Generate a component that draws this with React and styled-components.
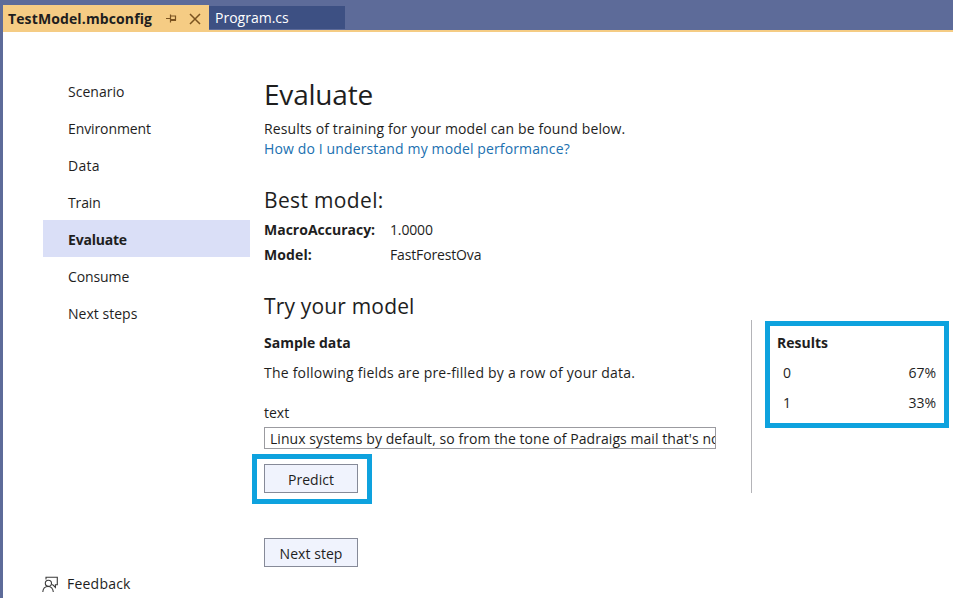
import React from 'react';
//styles
import styled, { createGlobalStyle } from 'styled-components';

//Data
const steps = [
    { name: 'Scenario', spacing: 0.03 },
    { name: 'Environment', spacing: -0.1 },
    { name: 'Data', spacing: 0.25 },
    { name: 'Train', spacing: -0.15 },
    { name: 'Evaluate', spacing: -0.2, active: true },
    { name: 'Consume', spacing: -0.1 },
    { name: 'Next steps', spacing: 0.03 },
];

const results = [
    { label: '0', score: '67%' },
    { label: '1', score: '33%' },
];

const PinIcon = () => (
    <svg width="11" height="9" viewBox="0 0 11 9" fill="none" stroke="#7a5320">
        <path d="M0 4.5H4M4.5 0.5V8.5M4.5 2H9.5V6H4.5" strokeWidth="1.2" />
        <path d="M4.5 6H10" strokeWidth="2" />
    </svg>
);

const CloseIcon = () => (
    <svg width="12" height="12" viewBox="0 0 12 12" fill="none" stroke="#7a5320" strokeWidth="1.5">
        <path d="M1 1L11 11M11 1L1 11" />
    </svg>
);

const FeedbackIcon = () => (
    <svg width="16" height="17" viewBox="0 0 16 17" fill="none" stroke="#3a3a3a" strokeWidth="1.1">
        <path d="M4 3.5V1.2H15.3V8.8H13.4V11.4L10.8 8.8H10" />
        <circle cx="6.4" cy="7.3" r="3.1" />
        <path d="M0.8 16C1 12.6 3 10.5 6 10.5C9 10.5 11 12.6 11.3 16" />
    </svg>
);

const App = () => {
    return(
        <>
        <GlobalStyle />
        <Window>
            <TabBar>
                <ActiveTab>
                    <Text $spacing={0.12}>TestModel.mbconfig</Text>
                    <PinIcon />
                    <CloseIcon />
                </ActiveTab>
                <Tab><Text $spacing={0}>Program.cs</Text></Tab>
            </TabBar>
            <Page>
                <Sidebar>
                    <nav>
                        {steps.map((step) => (
                            <Step key={step.name} $active={step.active}>
                                <Text $spacing={step.spacing}>{step.name}</Text>
                            </Step>
                        ))}
                    </nav>
                    <Feedback>
                        <FeedbackIcon />
                        <Text $spacing={0.22}>Feedback</Text>
                    </Feedback>
                </Sidebar>
                <Content>
                    <Title><Text $spacing={-0.2}>Evaluate</Text></Title>
                    <Line><Text $spacing={0.13}>Results of training for your model can be found below.</Text></Line>
                    <Link><Text $spacing={0.13}>How do I understand my model performance?</Text></Link>
                    <Heading $top={26}><Text $spacing={0.35}>Best model:</Text></Heading>
                    <Metrics>
                        <b><Text $spacing={0}>MacroAccuracy:</Text></b>
                        <Text $spacing={-0.15}>1.0000</Text>
                        <b><Text $spacing={0.1}>Model:</Text></b>
                        <Text $spacing={-0.15}>FastForestOva</Text>
                    </Metrics>
                    <Heading $top={24}><Text $spacing={0.17}>Try your model</Text></Heading>
                    <TryModel>
                        <Sample>
                            <Subheading><Text $spacing={0}>Sample data</Text></Subheading>
                            <Line $top={10}><Text $spacing={0.22}>The following fields are pre-filled by a row of your data.</Text></Line>
                            <Line $top={20}><Text $spacing={0}>text</Text></Line>
                            <Field>
                                <Text $spacing={0.06}>Linux systems by default, so from the tone of Padraigs mail that's no</Text>
                            </Field>
                            <Button $top={15} $marked><Text $spacing={0}>Predict</Text></Button>
                        </Sample>
                        <Results>
                            <Subheading><Text $spacing={0}>Results</Text></Subheading>
                            {results.map((result) => (
                                <Result key={result.label}>
                                    <span>{result.label}</span>
                                    <Text $spacing={0}>{result.score}</Text>
                                </Result>
                            ))}
                        </Results>
                    </TryModel>
                    <Button $top={45}><Text $spacing={0.05}>Next step</Text></Button>
                </Content>
            </Page>
        </Window>
        </>
    )
}

const GlobalStyle = createGlobalStyle`
    *{
        box-sizing: border-box;
    }
    body{
        margin: 0;
        overflow: hidden;
    }
`
const Window = styled.div`
    display: flex;
    flex-direction: column;
    height: 598px;
    background: white;
    border-left: 3px solid #5d6b99;
    color: #1e1e1e;
    font-family: "Open Sans", "Noto Sans", sans-serif;
    font-size: 14px;
    line-height: 20px;
`
const Text = styled.span`
    letter-spacing: ${({ $spacing }) => $spacing}px;
    white-space: nowrap;
`
const TabBar = styled.div`
    display: flex;
    height: 32px;
    padding-top: 5px;
    background: linear-gradient(#5d6b99 30px, #f5cc84 30px);
`
const ActiveTab = styled.div`
    display: flex;
    align-items: center;
    width: 206px;
    padding: 0 8px 0 5px;
    background: #f5cc84;
    font-weight: 700;
    svg:first-of-type{
        margin-left: auto;
        margin-right: 12px;
    }
`
const Tab = styled.div`
    width: 136px;
    height: 23px;
    margin-top: 1px;
    padding: 2px 6px 0;
    background: #3d5083;
    color: white;
`
const Page = styled.div`
    display: flex;
    flex: 1;
`
const Sidebar = styled.div`
    display: flex;
    flex-direction: column;
    justify-content: space-between;
    width: 207px;
    margin-left: 40px;
    padding: 40px 0 4px;
`
const Step = styled.div`
    height: 37px;
    padding: 2px 0 0 25px;
    line-height: 35px;
    background: ${({ $active }) => ($active ? '#dadff7' : 'none')};
    font-weight: ${({ $active }) => ($active ? 700 : 400)};
`
const Feedback = styled.div`
    display: flex;
    align-items: center;
    gap: 9px;
    margin-left: -1px;
`
const Content = styled.main`
    width: 689px;
    margin-left: 14px;
    padding-top: 42px;
`
const Title = styled.h1`
    margin: 0 0 5px;
    font-size: 28px;
    font-weight: 400;
    line-height: 40px;
`
const Line = styled.div`
    margin-top: ${({ $top }) => $top || 0}px;
`
const Link = styled.a`
    display: block;
    color: #2070b0;
`
const Heading = styled.h2`
    margin: ${({ $top }) => $top}px 0 0;
    font-size: 21px;
    font-weight: 400;
    line-height: 30px;
`
const Metrics = styled.div`
    display: grid;
    grid-template-columns: 126px auto;
    margin-top: 2px;
    line-height: 25px;
`
const TryModel = styled.div`
    display: flex;
    height: 173px;
    margin-top: -1px;
`
const Sample = styled.div`
    width: 488px;
    padding-top: 13px;
    border-right: 1px solid #b4b4b8;
`
const Subheading = styled.h3`
    margin: 0;
    font-size: 14px;
    font-weight: 700;
    line-height: 20px;
`
const Field = styled.div`
    width: 452px;
    height: 22px;
    margin-top: 4px;
    padding: 1px 0 0 5px;
    border: 1px solid #9b9ba0;
    overflow: hidden;
`
const Button = styled.button`
    position: relative;
    display: block;
    width: 94px;
    height: 29px;
    margin-top: ${({ $top }) => $top}px;
    padding: 2px 0 0;
    background: #f0f3fd;
    border: 1px solid #868a98;
    color: #1e1e1e;
    font: inherit;
    &::after{
        content: ${({ $marked }) => ($marked ? '""' : 'none')};
        position: absolute;
        inset: -11px -15px -12px -13px;
        border: 5px solid #0ea2de;
    }
`
const Results = styled.div`
    width: 184px;
    height: 107px;
    margin: 1px 0 0 13px;
    padding: 7px 8px 0 7px;
    border: 5px solid #0ea2de;
`
const Result = styled.div`
    display: flex;
    justify-content: space-between;
    margin-top: 10px;
    padding-left: 6px;
`

export default App;
